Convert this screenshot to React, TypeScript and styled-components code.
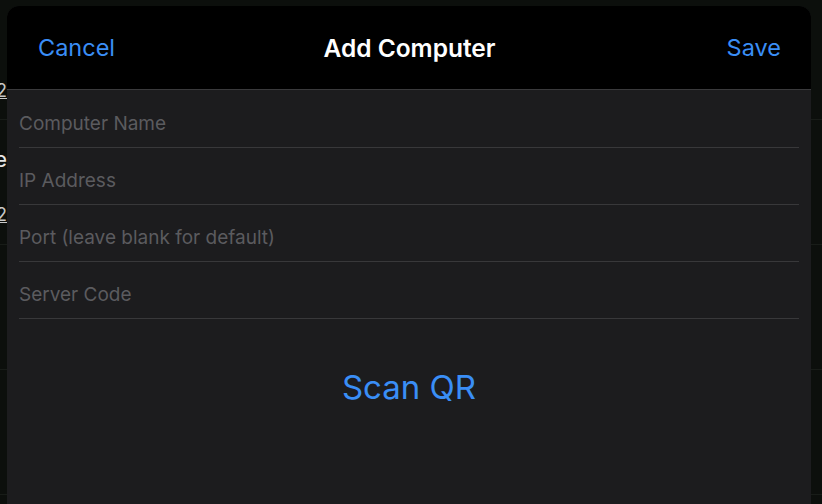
import React from "react";
import styled, { createGlobalStyle } from "styled-components";

const GlobalStyle = createGlobalStyle`
  html, body {
    margin: 0;
    padding: 0;
    background: #0c0f0c;
    font-family: Inter, "Noto Sans", sans-serif;
    overflow: hidden;
  }
`;

const fields = [
  "Computer Name",
  "IP Address",
  "Port (leave blank for default)",
  "Server Code",
];

export default function App() {
  return (
    <>
      <GlobalStyle />
      <Screen>
        <BgList>
          <BgRow $height={120}>
            <BgEdge $top={82}>
              <BgLink>192.168.1.2</BgLink>
            </BgEdge>
          </BgRow>
          <BgRow $height={125}>
            <BgEdge $top={28}>
              <BgTitle>Office PC Home Desktop Live</BgTitle>
            </BgEdge>
            <BgEdge $top={86}>
              <BgLink>10.0.0.12</BgLink>
            </BgEdge>
          </BgRow>
          <BgRow $height={125} />
          <BgRow $height={125} />
        </BgList>

        <Sheet>
          <Header>
            <NavButton>Cancel</NavButton>
            <Title>Add Computer</Title>
            <NavButton $right>Save</NavButton>
          </Header>
          <Form>
            {fields.map((f, i) => (
              <Field key={f} $first={i === 0}>
                <Input placeholder={f} />
              </Field>
            ))}
          </Form>
          <ScanButton>Scan QR</ScanButton>
        </Sheet>
      </Screen>
    </>
  );
}

const Screen = styled.div`
  position: relative;
  width: 822px;
  height: 504px;
  overflow: hidden;
  background: #0c0f0c;
`;

const BgList = styled.div`
  display: flex;
  flex-direction: column;
`;

const BgRow = styled.div<{ $height: number }>`
  position: relative;
  height: ${(p) => p.$height}px;
  border-bottom: 1px solid #181c18;
  box-sizing: border-box;
`;

const BgEdge = styled.div<{ $top: number }>`
  position: absolute;
  top: ${(p) => p.$top}px;
  left: 0;
  width: 7px;
  display: flex;
  justify-content: flex-end;
  white-space: nowrap;
`;

const BgLink = styled.span`
  color: #c8c8c8;
  font-size: 18px;
  line-height: 18px;
  text-decoration: underline;
`;

const BgTitle = styled.span`
  color: #e6e6e6;
  font-size: 22px;
  line-height: 22px;
`;

const Sheet = styled.div`
  position: absolute;
  top: 6px;
  left: 7px;
  width: 804px;
  height: 520px;
  background: #1c1c1e;
  border-radius: 12px;
  overflow: hidden;
  display: flex;
  flex-direction: column;
`;

const Header = styled.div`
  height: 83px;
  background: #000;
  border-bottom: 1px solid #3a3a3c;
  display: grid;
  grid-template-columns: 1fr auto 1fr;
  align-items: center;
  padding: 0 30px 0 31px;
  box-sizing: content-box;
`;

const NavButton = styled.button<{ $right?: boolean }>`
  background: none;
  border: none;
  padding: 0;
  color: #3a8ef6;
  font-family: inherit;
  font-size: 23.5px;
  justify-self: ${(p) => (p.$right ? "end" : "start")};
`;

const Title = styled.div`
  color: #fff;
  font-size: 24.5px;
  font-weight: 600;
`;

const Form = styled.div`
  display: flex;
  flex-direction: column;
  padding: 0 12px;
`;

const Field = styled.div<{ $first?: boolean }>`
  border-bottom: 1px solid #38383a;
  display: flex;
  align-items: flex-end;
  padding-bottom: 12px;
  box-sizing: border-box;
  height: ${(p) => (p.$first ? 58 : 57)}px;
`;

const Input = styled.input`
  background: none;
  border: none;
  outline: none;
  padding: 0;
  width: 100%;
  color: #fff;
  font-family: inherit;
  font-size: 19px;
  &::placeholder {
    color: #5b5b5f;
  }
`;

const ScanButton = styled.button`
  align-self: center;
  margin-top: 48px;
  background: none;
  border: none;
  padding: 0;
  color: #3a8ef6;
  font-family: inherit;
  font-size: 33px;
`;
